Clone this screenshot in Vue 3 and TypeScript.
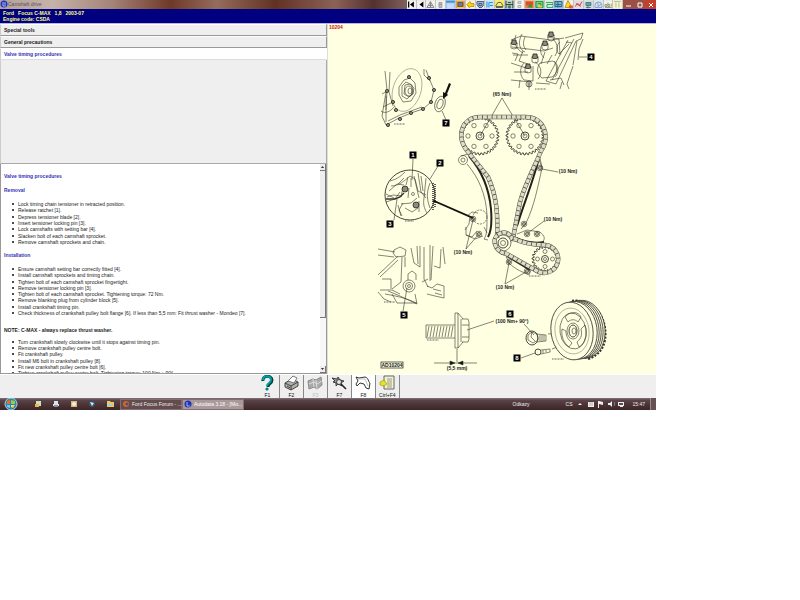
<script setup lang="ts">
interface Shape { d: string; fill?: string; stroke?: string }
interface Tool { name: string; bg?: string; shapes: Shape[] }
interface Label { x: number; y: number; text: string }

const topTools: Tool[] = [
  { name: 'First', shapes: [{ d: 'M1 1h1.3v6H1zM7 1v6L3 4z', fill: '#000' }] },
  { name: 'Back', shapes: [{ d: 'M6.500 1v6L2.500 4z', fill: '#000' }] },
  { name: 'Up', shapes: [{ d: 'M4.500 1L8 7H1zM2.500 5h4M4.500 2v5', stroke: '#777' }] },
  { name: 'Pause', shapes: [{ d: 'M3 2h3v5H3zM3 4h3', fill: '#bbb', stroke: '#999' }] },
  { name: 'Window', bg: '#9cc4ec', shapes: [{ d: 'M0 0h9v2H0z', fill: '#3f8ed8' }, { d: 'M1 3h7v5H1z', fill: '#c6ddf4' }] },
  { name: 'Body', bg: '#d9a441', shapes: [{ d: 'M2 2h5v4H2z', fill: '#687da0', stroke: '#744' }, { d: 'M1 7h7', stroke: '#ffd23a' }] },
  { name: 'Key', shapes: [{ d: 'M1 4l3-3 1 2h3v3H5L3 7z', fill: '#ffd500', stroke: '#b98c00' }] },
  { name: 'Tuning', shapes: [{ d: 'M1 1h7v3L6 7H3L1 4zM3 3h3v2H3z', fill: '#a9bad0', stroke: '#334e78' }] },
  { name: 'Engine', bg: '#c5e4f7', shapes: [{ d: 'M2 1v6M4 2v5M4 2h4M5 5h3', stroke: '#1685d0' }] },
  { name: 'Vehicle', bg: '#ffe94c', shapes: [{ d: 'M1 5l2-3h3l2 3v1H1zM1 7h7', fill: '#fff36b', stroke: '#3d5360' }] },
  { name: 'Lift', bg: '#b9c9bd', shapes: [{ d: 'M1 0v8M8 0v8M1 4h7M3 2h3', stroke: '#203d30' }, { d: 'M3 5h3v3H3z', fill: '#3e855b' }] },
  { name: 'Belt', shapes: [{ d: 'M3 1h3v2H3zM3 5h3v2H3z', fill: '#ddd', stroke: '#aaa' }] },
  { name: 'Timing', bg: '#f08840', shapes: [{ d: 'M1 1h7v4H1z', fill: '#e34a2c' }, { d: 'M2 7l4-4 2 4z', fill: '#37943d' }] },
  { name: 'Chain', bg: '#8dc986', shapes: [{ d: 'M1 1h7v6H1zM3 3h3v3', stroke: '#119642' }, { d: 'M3 5h4v2H3z', fill: '#ffcc22' }] },
  { name: 'Aircon', bg: '#d7f1da', shapes: [{ d: 'M1 2h7v2H2v3h6V5', stroke: '#139f58' }] },
  { name: 'Wiring', bg: '#86b9ce', shapes: [{ d: 'M1 1h7v5H1zM2 4h5M4 1v6', stroke: '#205d86' }] },
  { name: 'Warning', shapes: [{ d: 'M4 0L8 7H1z', fill: '#ffde27', stroke: '#b78f00' }, { d: 'M5 5h4v3H5z', fill: '#e55b2b' }] },
  { name: 'Diagnostics', bg: '#ecd9dc', shapes: [{ d: 'M1 6l3-3 2 2 2-4M2 3l5 3', stroke: '#a93743' }] },
  { name: 'Airbag', bg: '#cce0d6', shapes: [{ d: 'M2 2h5v3H2zM4 5v3M2 7h5', fill: '#719da4', stroke: '#44777b' }] },
  { name: 'Gauge', bg: '#d7e6f4', shapes: [{ d: 'M1 5a3 3 0 017 0v2H1zM4 2v4l3-2', stroke: '#7c9bc0' }] },
  { name: 'ABS', shapes: [{ d: 'M1 4h2v2H1zM4 2v4h2V4H4M8 3v3M1 7h7', stroke: '#879568' }] },
  { name: 'Notes', bg: '#f5f5bd', shapes: [{ d: 'M3 2v5M6 2v5M1 1h7', stroke: '#a7b3bc' }] },
]

const vehicle = ['Ford', 'Focus C-MAX', '1,8', '2003-07']
const tabs = ['Special tools', 'General precautions', 'Valve timing procedures']
const removal = [
  'Lock timing chain tensioner in retracted position.',
  'Release ratchet [1].',
  'Depress tensioner blade [2].',
  'Insert tensioner locking pin [3].',
  'Lock camshafts with setting bar [4].',
  'Slacken bolt of each camshaft sprocket.',
  'Remove camshaft sprockets and chain.',
]
const installation = [
  'Ensure camshaft setting bar correctly fitted [4].',
  'Install camshaft sprockets and timing chain.',
  'Tighten bolt of each camshaft sprocket fingertight.',
  'Remove tensioner locking pin [3].',
  'Tighten bolt of each camshaft sprocket. Tightening torque: 72 Nm.',
  'Remove blanking plug from cylinder block [5].',
  'Install crankshaft timing pin.',
  'Check thickness of crankshaft pulley bolt flange [6]. If less than 5,5 mm: Fit thrust washer - Mondeo [7].',
]
const finishing = [
  'Turn crankshaft slowly clockwise until it stops against timing pin.',
  'Remove crankshaft pulley centre bolt.',
  'Fit crankshaft pulley.',
  'Install M6 bolt in crankshaft pulley [8].',
  'Fit new crankshaft pulley centre bolt [6].',
  'Tighten crankshaft pulley centre bolt. Tightening torque: 100 Nm + 90°.',
]

const callouts: Label[] = [
  { x: 413, y: 155, text: '1' }, { x: 440, y: 163, text: '2' }, { x: 390, y: 224, text: '3' },
  { x: 591, y: 57, text: '4' }, { x: 404, y: 315, text: '5' }, { x: 510, y: 314, text: '6' },
  { x: 446, y: 123, text: '7' }, { x: 517, y: 358, text: '8' },
]
const torques: Label[] = [
  { x: 502, y: 96, text: '(65 Nm)' }, { x: 568, y: 173, text: '(10 Nm)' }, { x: 553, y: 221, text: '(10 Nm)' },
  { x: 463, y: 254, text: '(10 Nm)' }, { x: 505, y: 289, text: '(10 Nm)' },
  { x: 512, y: 323, text: '(100 Nm+ 90°)' }, { x: 457, y: 370, text: '(5,5 mm)' },
]

function gear(cx: number, cy: number, inner: number, outer: number, teeth: number): string {
  const points: string[] = []
  for (let i = 0; i < teeth * 4; i++) {
    const angle = (i / (teeth * 4)) * Math.PI * 2
    const r = i % 4 < 2 ? outer : inner
    points.push(`${(cx + r * Math.cos(angle)).toFixed(2)} ${(cy + r * Math.sin(angle)).toFixed(2)}`)
  }
  return `M${points.join('L')}Z`
}
function ring(cx: number, cy: number, r: number, count: number): { x: number; y: number }[] {
  return Array.from({ length: count }, (_, i) => {
    const angle = (i / count) * Math.PI * 2
    return { x: cx + r * Math.cos(angle), y: cy + r * Math.sin(angle) }
  })
}

const camGears = [{ x: 480, y: 136 }, { x: 525, y: 136 }]
const chains = [
  'M497 238C498 214 497 197 488 177L468 152C455 136 462 117 480 117H525C544 117 551 136 541 151C535 166 525 184 520 202L513 238',
  'M513 238C522 243 534 245 545 245A14 14 0 1 1 537 271L507 254C494 252 491 238 499 234C506 230 512 235 513 242',
]
const bolts = [
  [473, 219], [479, 234], [540, 168], [524, 224], [527, 234], [537, 234], [509, 262], [527, 271],
]
const coverBolts = [
  [387, 91], [393, 102], [396, 110], [388, 125], [400, 119], [411, 113], [423, 109], [431, 102], [434, 90], [429, 78], [409, 77],
]
const capBolts = [[514, 43], [551, 35], [545, 44], [535, 57], [528, 67]]
</script>

<template>
  <div class="desktop">
    <header class="titlebar">
      <svg class="app-icon" viewBox="0 0 8 8" aria-hidden="true"><circle cx="4" cy="4" r="3.500" fill="#2534b4" /><path d="M3 2v4h3M5 2v3" stroke="#9db4ff" fill="none" /></svg>
      <span class="window-title">Camshaft drive</span>
      <nav class="top-tools" aria-label="Modules">
        <button v-for="tool in topTools" :key="tool.name" type="button" :aria-label="tool.name">
          <svg viewBox="0 0 9 8"><rect width="9" height="8" :fill="tool.bg ?? '#f2f2ee'" /><path v-for="(s, i) in tool.shapes" :key="i" :d="s.d" :fill="s.fill ?? 'none'" :stroke="s.stroke ?? 'none'" stroke-width=".9" /></svg>
        </button>
      </nav>
      <div class="window-controls">
        <button type="button" aria-label="Minimize"><svg viewBox="0 0 9 8"><path d="M2 5h5" stroke="#fff" /></svg></button>
        <button type="button" aria-label="Restore"><svg viewBox="0 0 9 8"><path d="M3 2h4v4H3z" fill="none" stroke="#fff" /></svg></button>
        <button type="button" class="close" aria-label="Close"><svg viewBox="0 0 9 8"><path d="M3 2l4 4M7 2L3 6" stroke="#fff" /></svg></button>
      </div>
    </header>

    <section class="vehicle">
      <p><span v-for="part in vehicle" :key="part">{{ part }}</span></p>
      <p>Engine code: CSDA</p>
    </section>

    <main class="workspace">
      <section class="procedure">
        <nav class="tabs">
          <button v-for="(tab, i) in tabs" :key="tab" type="button" :class="{ active: i === 2 }">{{ tab }}</button>
        </nav>
        <div class="blank"></div>
        <div class="reader">
          <article>
            <h1>Valve timing procedures</h1>
            <h2>Removal</h2>
            <ul><li v-for="step in removal" :key="step">{{ step }}</li></ul>
            <h2>Installation</h2>
            <ul class="long"><li v-for="step in installation" :key="step">{{ step }}</li></ul>
            <h3>NOTE: C-MAX - always replace thrust washer.</h3>
            <ul class="short"><li v-for="step in finishing" :key="step">{{ step }}</li></ul>
          </article>
          <div class="scrollbar">
            <button type="button" aria-label="Scroll up"><svg viewBox="0 0 6 6"><path d="M1 4h4L3 2z" /></svg></button>
            <div class="thumb"></div>
            <div class="track"></div>
            <button type="button" aria-label="Scroll down"><svg viewBox="0 0 6 6"><path d="M1 2h4L3 4z" /></svg></button>
          </div>
        </div>
      </section>

      <figure class="diagram">
        <svg viewBox="328 24 328 350" role="img" aria-label="Timing chain">
          <text x="329" y="29" class="page-id">10204</text>
          <g class="line">
            <!-- camshaft bearing caps and setting bar -->
            <path d="M511 40l10-4 30 4 13-2M512 47l32 4 9-3M513 55h15M511 63l15 5M514 72h14M511 80l20 2M516 35c-3 8 0 14 7 18M522 34c-5 9-2 16 3 18M525 37c-3 7-1 10 1 13M542 45c-3 4-1 10 2 13M547 37l12 2 1 16M553 39c6 6 5 12 2 17M560 42c-4 3-4 9-1 12l10-10M566 42l6 1M512 53l6 1-3 7M523 51l-4 10 9 3M545 52l-4 12M552 55l-5 9M524 63c-5 5-4 13 0 17l9 1V66M535 62c6 3 8 12 3 17M540 63c-4 6-3 11 2 15l10-1c6-3 6-13 1-16zM554 61c5 4 5 12 1 16M520 80l-1 8M529 83v7M550 80l11-2 3 7M562 82l-2 7M565 38l18-5-2 6-5 2-20 43-10-3 22-41M574 39l-22 41M577 41l-4 24M573 66l-6 18 2 5M583 39l-4 10-1 11M536 83l14 1" />
            <ellipse cx="529" cy="84" rx="3" ry="3" /><path d="M528 81v6M530 81v6M579 57h8" />
            <g v-for="b in capBolts" :key="b.join()"><path :d="`M${b[0] - 3} ${b[1]}v5l3 1 3-1v-5z`" /><ellipse :cx="b[0]" :cy="b[1]" rx="3" ry="1.600" class="bolt-head" /><path :d="`M${b[0] - 2} ${b[1] - 1}v-2h4v2`" class="bolt-head" /></g>

            <!-- front cover, washer -->
            <path d="M385 71l2 19-1 20M390 72l-1 20 4 14M386 92l-4 24 4 9M383 107l10-5M381 111c4 3 9 1 14-5M386 125l13-7 12-5 12-4 8-7 3-12-5-12-3-8M388 121l12-6 11-4 11-4M424 69v6l6 6M382 94l7-4M386 96v26" />
            <ellipse cx="407" cy="90" rx="14" ry="22" transform="rotate(18 407 90)" class="thin" />
            <path d="M399 87l5-7 6-2 5 5 1 10-5 8-8 1-4-7zM402 86l4-4 6 3v9l-5 5-5-3zM405 85l5-1 4 4-1 6-4 3-5-3z" />
            <ellipse cx="409" cy="91" rx="4" ry="5" /><ellipse cx="410" cy="91" rx="2" ry="3" />
            <circle v-for="b in coverBolts" :key="b.join()" :cx="b[0]" :cy="b[1]" r="1.600" class="bolt-head" />
            <ellipse cx="440" cy="104" rx="5" ry="8" transform="rotate(18 440 104)" /><ellipse cx="440" cy="104" rx="2.800" ry="5" transform="rotate(18 440 104)" />
            <path d="M442 111l4 9" />

            <!-- lower left: crankcase plug -->
            <path d="M378 249l17 3M378 255l16 2M378 275l20-19M380 277l18-17M394 250l6-3 6 3-1 6-9 1-3-4zM402 257l-1 25-9 7M405 257v10M382 279h9v10M380 290h12l8 4M411 248l3 15 6 4V246M417 246l1 18M424 247v32l4 8M430 245v36M433 246l-2 34M422 282l6-3M441 249l-1 19M443 247l2 17M434 266l6 2M408 280v-6l4-3 4 3v6M415 294l2 10-17-8-12-5M385 294c12 2 24 5 31 9M378 292l6 7 7 3M392 294l5 9h20M427 286l5 2 5-4 7 2v12l-9-2-8-2M433 289l8 2M435 293l7 2M407 288l-4 23" />
            <circle cx="409" cy="286" r="6" /><circle cx="409" cy="286" r="3.600" /><circle cx="409" cy="286" r="1.500" />

            <!-- tensioner detail -->
            <circle cx="410" cy="195" r="25" class="edge" />
            <path d="M413 159l-1 21M438 166l-8 13M394 220l3-21M390 181c8-2 12-6 15-9M391 186c8 0 13-5 19-10l5 3 3 12 8 4M389 191l8-7 7 1M403 187l-2 10M409 188l-1 10M411 178v9M418 173l3 19 5 6M414 176l5 22M426 178l-2 20c-1 6 0 10 3 15M430 183c-4 10-3 17 0 25M387 197l6-2 9 1M386 202l9-3 5-7M401 204l10-1 6-5M398 205l3 11M403 203l-4 7 3 6M405 208l7 4 6-4M421 176l2 15M386 194l8 4M404 178l-6 6M408 177l-2 8M419 201v11" />
            <circle cx="405" cy="189" r="3" class="bolt-head" /><circle cx="416" cy="205" r="3" class="bolt-head" /><circle cx="413" cy="194" r="1.500" />
            <path d="M386 199h9l5-2 4-4" stroke-width="1.400" />
            <path d="M433 183v27M435 184v24" stroke-dasharray="1 1" stroke-width="1.600" />
          </g>
          <path d="M432 201l2-1 39 17v2z" fill="#111" />
          <path d="M449 83l2 1-4 10 1 1-5 4v-7l2 1z" fill="#111" />

          <!-- guides -->
          <g class="line">
            <circle cx="463" cy="160" r="4.500" /><circle cx="463" cy="160" r="2" />
            <path d="M467 164c12 14 19 31 20 51 0 13 0 20-3 24l4 1M540 158l2 10c-4 18-8 39-16 55l-5 6M538 158l4 9M461 156l7-2" />
            <path d="M517 234l10-4 13 2c5 4 5 7 3 9M506 256l3 7c7 7 14 9 20 12l2-5" />
            <path d="M467 216l5-4 6 1M465 230l4-6 1-8M466 235l6 2 5-6M466 227v8l9 4 8-3M484 227l3 6" />
            <circle cx="480" cy="217" r="7" stroke-dasharray="2 1" />
          </g>
          <g fill="none" stroke="#222" stroke-width="2">
            <path d="M469 156c13 15 20 32 22 53 1 13 0 23-3 28M539 158c-6 24-14 42-22 68M516 238c9 4 18 6 28 4M507 256l23 14" />
          </g>

          <!-- cam sprockets -->
          <g v-for="g in camGears" :key="g.x" class="line">
            <path :d="gear(g.x, g.y, 17, 19, 32)" class="edge" />
            <circle v-for="(h, i) in ring(g.x, g.y, 12, 6)" :key="i" :cx="h.x" :cy="h.y" r="2.200" />
            <circle :cx="g.x" :cy="g.y" r="4" class="edge" /><circle :cx="g.x" :cy="g.y" r="2" />
            <path :d="`M502 98L${g.x} ${g.y}`" />
          </g>
          <g class="line">
            <path :d="gear(545, 259, 11, 13, 22)" class="edge" />
            <circle v-for="(h, i) in ring(545, 259, 7.5, 4)" :key="i" :cx="h.x" :cy="h.y" r="2" />
            <circle cx="545" cy="259" r="3.500" class="edge" /><circle cx="545" cy="259" r="1.500" />
            <circle cx="503" cy="243" r="8" /><circle cx="503" cy="243" r="5" class="edge" /><circle cx="503" cy="243" r="2.500" />
          </g>
          <g v-for="c in chains" :key="c" fill="none">
            <path :d="c" stroke="#4a4a42" stroke-width="4.400" />
            <path :d="c" stroke="#dedec6" stroke-width="3.400" />
            <path :d="c" stroke="#4a4a42" stroke-width="3.400" stroke-dasharray=".8 4" />
          </g>
          <g class="line">
            <g v-for="b in bolts" :key="b.join()"><circle :cx="b[0]" :cy="b[1]" r="2.800" /><circle :cx="b[0]" :cy="b[1]" r="1.400" class="edge" /></g>
            <path d="M542 169l16 3M544 221l-16 12M466 249l7-29M466 249l12-14M505 284l4-21M505 284l21-12" />
          </g>

          <!-- centre bolt, side view -->
          <g class="line">
            <path d="M426 325h29M426 338h29M426 325v13M455 313v35M458 313v35M455 313h3l5 6M455 348h3l5-6M462 319h6l1 3v17l-1 3h-6M461 319v23M462 325h7M462 337h7M467 330l27-9M524 324l10 11M457 349v13" />
            <path v-for="n in 9" :key="n" :d="`M${426 + n * 3} 326l-2 11`" />
            <path d="M434 363h43" /><path d="M450 361l5 2-5 2zM463 361l-5 2 5 2z" fill="#111" />
            <ellipse cx="532" cy="338" rx="6" ry="7" class="edge" /><path d="M528 335l4-3 5 2 1 6-5 3-5-3zM532 332l-1 5 4 4M537 334l9 1v6l-9 1M540 335v6M542 335v6M544 335v6" />
            <ellipse cx="538" cy="352" rx="3" ry="3" class="edge" /><path d="M541 350l9-1v3l-9 2M543 350v3M546 350v2M521 358l14-5M548 334l12-1M552 349l8-3" />
          </g>

          <!-- crankshaft pulley -->
          <g class="line">
            <path d="M572 301c16-2 31 9 33 28 2 16-5 26-17 30" stroke-width="2.400" stroke-dasharray="2 1.500" />
            <ellipse v-for="n in 5" :key="n" :cx="586 - n * 2" cy="330" rx="21" ry="29" transform="rotate(-8 578 330)" class="pulley" />
            <ellipse cx="572" cy="331" rx="21" ry="29" transform="rotate(-8 572 331)" class="pulley" />
            <ellipse cx="572" cy="331" rx="17" ry="23" transform="rotate(-8 572 331)" class="thin" />
            <ellipse cx="573" cy="331" rx="13" ry="18" transform="rotate(-8 573 331)" />
            <path d="M565 317c5-6 13-6 16 0l-3 5c-3-3-7-3-10 0zM562 329l4 2c0 6 2 8 6 12l-3 4c-5-4-8-10-7-18zM585 325c3 8 1 18-6 22l-2-5c5-4 5-8 4-13z" />
            <ellipse cx="573" cy="331" rx="6" ry="8" /><ellipse cx="573" cy="331" rx="4" ry="6" class="edge" /><ellipse cx="574" cy="331" rx="2" ry="3" />
          </g>

          <g class="line plates"><path d="M394 124h11M535 89h11M405 221h9M384 302h11M529 276h12M427 340h12M552 359h12" /></g>
          <rect x="381" y="362" width="22" height="6" class="code-box" />
          <text x="392" y="367" text-anchor="middle" class="note">AD10204</text>
          <text v-for="(t, i) in torques" :key="i" :x="t.x" :y="t.y" text-anchor="middle" class="note">{{ t.text }}</text>
          <g v-for="c in callouts" :key="c.text">
            <rect :x="c.x - 3.5" :y="c.y - 3.5" width="7" height="7" fill="#000" />
            <text :x="c.x" :y="c.y + 2" text-anchor="middle" class="callout">{{ c.text }}</text>
          </g>
        </svg>
      </figure>
    </main>

    <footer class="function-keys">
      <button type="button">
        <svg viewBox="0 0 16 16"><path d="M4 6c-1-6 9-6 9-1 0 4-4 3-4 7" fill="none" stroke="#063f40" stroke-width="3" /><path d="M4 5c0-5 8-5 8 0 0 3-4 3-4 6" fill="none" stroke="#00a0a0" stroke-width="2" /><circle cx="8" cy="14" r="1.600" fill="#008080" /></svg>
        <span>F1</span>
      </button>
      <button type="button">
        <svg viewBox="0 0 16 16"><path d="M2 8l7-4 6 3v4l-7 4-6-3z" fill="#b0b0a8" stroke="#444" /><path d="M5 6l5-5 4 2-3 5z" fill="#fff" stroke="#777" /><path d="M2 8l6 3 7-4M8 11v4M4 11l3 2" fill="none" stroke="#444" /></svg>
        <span>F2</span>
      </button>
      <button type="button" disabled>
        <svg viewBox="0 0 16 16"><path d="M1 6l5-2 3 1 5-3 1 8-5 4-3-2-5 2z" fill="#aaa" stroke="#888" /><path d="M6 4l1 8M9 5l1 9M2 9l5-2 3 2 5-3" fill="none" stroke="#ddd" /></svg>
        <span>F3</span>
      </button>
      <button type="button">
        <svg viewBox="0 0 16 16"><path d="M1 3l5 1 1-2 2 3 4 1-3 2 1 3-4-2-2 2V8L2 7l2-1z" fill="#999" stroke="#222" stroke-width=".8" /><circle cx="8" cy="7" r="2.500" fill="#e5e5e5" stroke="#222" stroke-width=".8" /><path d="M10 9l5 5" stroke="#222" stroke-width="1.600" /></svg>
        <span>F7</span>
      </button>
      <button type="button" class="selected">
        <svg viewBox="0 0 16 16"><path d="M1 2l3 1 6-1c4 1 3 5 5 6l-1 6-3-1-2-4-4-1-3 3-1-2 2-3z" fill="#fff" stroke="#333" /><path d="M3 4l7 0 3 7" fill="none" stroke="#999" stroke-width=".6" /></svg>
        <span>F8</span>
      </button>
      <button type="button">
        <svg viewBox="0 0 16 16"><path d="M5 1h10v13H5z" fill="#f3f3d0" stroke="#666" /><path d="M8 4h5M8 6h5M8 8h5M8 10h5M8 12h5" stroke="#776" stroke-width=".7" /><path d="M1 7l4-2 3 4-3 2-4-1z" fill="#e5e22a" stroke="#998d00" stroke-width=".6" /></svg>
        <span>Ctrl+F4</span>
      </button>
    </footer>

    <footer class="taskbar">
      <button type="button" class="start" aria-label="Start"><svg viewBox="0 0 14 12"><circle cx="7" cy="6" r="6" fill="#2c86aa" stroke="#a7d0dc" /><path d="M3 3l3-1v4H3z" fill="#f16a35" /><path d="M7 2l4 1v3H7z" fill="#9acb47" /><path d="M3 7h3v3L3 9z" fill="#76c8f0" /><path d="M7 7h4L9 10 7 9z" fill="#ffd651" /></svg></button>
      <nav class="quick" aria-label="Quick launch">
        <a href="#" aria-label="Pictures"><svg viewBox="0 0 8 8"><path d="M2 1h5v5H2z" fill="#d2dec2" /><path d="M1 4h4v3H1z" fill="#edb84a" /></svg></a>
        <a href="#" aria-label="Drive"><svg viewBox="0 0 8 8"><path d="M2 1h4v3h1v2H1V4h1z" fill="#dce4e8" /><path d="M2 5h4v2H2z" fill="#83949d" /></svg></a>
        <a href="#" aria-label="Media"><svg viewBox="0 0 8 8"><path d="M1 1h6v6H1z" fill="#d9b57d" /><circle cx="4" cy="4" r="2" fill="#eef1dd" /></svg></a>
        <a href="#" aria-label="Mail"><svg viewBox="0 0 8 8"><circle cx="4" cy="4" r="3" fill="#395470" /><path d="M2 2l4 1-2 3z" fill="#d9e8f2" /></svg></a>
        <a href="#" aria-label="Folder"><svg viewBox="0 0 8 8"><path d="M1 1h3l1 1h3v5H1z" fill="#edc763" /><path d="M2 4h5v2H2z" fill="#9fd0ce" /></svg></a>
      </nav>
      <button type="button" class="task"><svg viewBox="0 0 8 8"><circle cx="4" cy="4" r="3" fill="#dd6122" /><circle cx="5" cy="4" r="1.500" fill="#35598d" /></svg>Ford Focus Forum - ...</button>
      <button type="button" class="task current"><svg viewBox="0 0 8 8"><circle cx="4" cy="4" r="3.500" fill="#2534b4" /><path d="M3 2v4h3" stroke="#9db4ff" fill="none" /></svg>Autodata 3.18 - [Mo...</button>
      <a href="#" class="links">Odkazy</a>
      <div class="tray">
        <span>CS</span>
        <svg viewBox="0 0 56 8" aria-hidden="true"><path d="M4 5h4L6 3zM14 2h6v5h-6zM24 1h1v7h-1zM25 1l4 1v3l-4-1zM34 3h2l2-2v6l-2-2h-2zM44 2h6v4h-6zM46 6h3v1h-3z" fill="#eee" /><path d="M40 2c1 1 1 3 0 4M15 3h4M15 5h4" stroke="#998" fill="none" stroke-width=".7" /><path d="M45 3h4v2h-4z" fill="#645" /></svg>
        <time>15:47</time>
      </div>
      <button type="button" class="show-desktop" aria-label="Show desktop"></button>
    </footer>
  </div>
</template>

<style>
body { background: #fff; }
</style>

<style scoped>
.desktop { width: 82%; font: 5px/6px "Liberation Sans", Arial, sans-serif; color: #222; }
.desktop * { box-sizing: border-box; }
p, h1, h2, h3, ul, figure { margin: 0; padding: 0; }
button { margin: 0; padding: 0; border: 0; font: inherit; color: inherit; background: none; }
a { color: inherit; text-decoration: none; }
svg { display: block; }

.titlebar { display: flex; align-items: stretch; height: 9px; background: linear-gradient(90deg, #b3a19a 0, #c5b2a9 8%, #a58479 17%, #6e3927 26%, #946c5d 33%, #613224 42%, #8b6257 51%, #533130 57%, #876a63 63%); }
.app-icon { width: 8px; height: 8px; }
.window-title { flex: 1; line-height: 9px; color: #555061; }
.top-tools { display: flex; width: 33%; background: #e8e6df; }
.top-tools button { flex: 1; border-right: 1px solid #c6c3bc; }
.top-tools svg { width: 100%; height: 9px; }
.window-controls { display: flex; width: 5%; background: #9a5145; }
.window-controls button { flex: 1; }
.window-controls .close { background: #c5402a; }
.window-controls svg { height: 8px; margin: 0 auto; }

.vehicle { height: 15px; padding: 1px 3px; background: #000080; border-bottom: 1px solid #b6b6df; color: #ffff80; font-weight: 700; }
.vehicle p { display: flex; gap: 4px; }

.workspace { display: grid; grid-template-columns: 1fr 1fr; background: #ffffe1; }
.procedure { display: flex; flex-direction: column; contain: size; min-width: 0; border-right: 1px solid #ddd; }
.tabs { display: flex; flex-direction: column; }
.tabs button { height: 12px; padding: 0 3px; text-align: left; font-weight: 700; background: #efefef; border: 1px solid #999; border-top-color: #fff; border-left-color: #ccc; }
.tabs .active { background: #fff; color: #3333b8; border-right-color: #fff; border-bottom-color: #ddd; }
.blank { height: 104px; background: #efefef; border: 1px solid #aaa; border-top: 0; border-left-color: #ccc; }
.reader { flex: 1; min-height: 0; display: flex; background: #fff; border: 1px solid #999; border-top: 0; }
article { flex: 1; overflow: hidden; padding: 9px 3px 0; white-space: nowrap; }
h1, h2, h3 { font-size: 5px; line-height: 6px; color: #3333b8; }
h2 { margin-top: 8px; }
ul + h2 { margin-top: 7px; }
h3 { margin-top: 11px; color: #222; }
ul { display: grid; align-content: space-between; height: 44px; margin-top: 8px; padding-left: 14px; list-style: none; }
ul.long { height: 50px; }
ul.short { height: 37px; margin-top: 6px; }
li { position: relative; height: 6px; }
li::before { content: ""; position: absolute; left: -6px; top: 2px; width: 2px; height: 2px; border-radius: 50%; background: #111; }
.scrollbar { display: flex; flex-direction: column; width: 6px; background: #f2f2f2; }
.scrollbar button { height: 7px; background: #eee; border-bottom: 1px solid #777; border-right: 1px solid #777; }
.scrollbar svg { width: 5px; height: 6px; }
.thumb { flex: 3; background: #eee; border-right: 1px solid #777; border-bottom: 1px solid #777; }
.track { flex: 1; background: #f7f7f7; }

.diagram svg { width: 100%; height: auto; }
.line { fill: none; stroke: #34342e; stroke-width: .6; }
.thin { stroke: #8a8a78; }
.edge { stroke-width: .9; }
.bolt-head { fill: #8c8c7c; stroke: #222; stroke-width: .8; }
.pulley { fill: #ffffe1; stroke-width: .8; }
.plates { stroke: #666; stroke-width: 1; stroke-dasharray: 1 .5; }
.code-box { fill: none; stroke: #222; stroke-width: .7; }
.page-id { font: 700 5px "Liberation Sans", sans-serif; fill: #d01818; }
.note { font: 700 5px "Liberation Sans", sans-serif; fill: #222; }
.callout { font: 700 6px "Liberation Sans", sans-serif; fill: #fff; }

.function-keys { display: flex; height: 24px; padding-left: 39%; background: #efefef; border-top: 1px solid #fff; }
.function-keys button { width: 24px; display: flex; flex-direction: column; align-items: center; justify-content: space-between; border-right: 1px solid #888; color: #111; white-space: nowrap; }
.function-keys svg { width: 16px; height: 16px; }
.function-keys button:disabled { color: #bbb; }
.function-keys .selected { background: #fff; }

.taskbar { display: flex; align-items: center; height: 12px; background: linear-gradient(#857477 0, #594449 18%, #4b3436 55%, #3b2528 100%); color: #eee; }
.start { width: 22px; }
.start svg { height: 12px; width: 14px; margin: 0 auto; }
.quick { display: flex; gap: 10px; padding: 0 6px 0 12px; }
.quick svg { width: 8px; height: 8px; }
.task { display: flex; align-items: center; gap: 2px; width: 62px; height: 11px; padding: 0 1px; border: 1px solid #846d70; background: #644c4e; white-space: nowrap; }
.task svg { width: 8px; height: 8px; flex: none; }
.task.current { background: #a9999b; color: #fff; }
.links { margin-left: auto; }
.tray { display: flex; align-items: center; gap: 2px; margin-left: 36px; }
.tray svg { width: 56px; height: 8px; }
.tray time { margin-right: 5px; }
.show-desktop { width: 6px; height: 12px; border-left: 1px solid #9a898c; background: #655154; }
</style>
